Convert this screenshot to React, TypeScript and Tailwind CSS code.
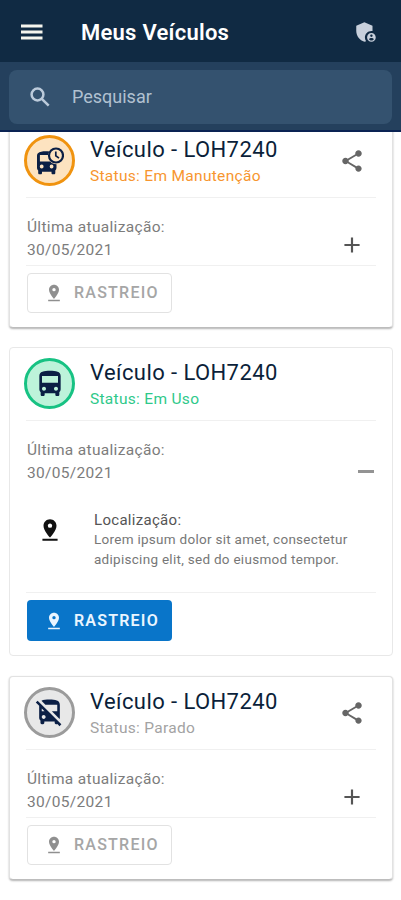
import { ReactNode, useState } from "react"
import { clsx } from "clsx"
import {
    MdAdd,
    MdAdminPanelSettings,
    MdDirectionsBus,
    MdNoTransfer,
    MdPinDrop,
    MdShare,
} from "react-icons/md"

type Status = 'manutencao' | 'uso' | 'parado'

interface IVehicle {
    id: number
    name: string
    status: Status
    updatedAt: string
    location?: string
}

const vehicles: IVehicle[] = [
    { id: 1, name: 'Veículo - LOH7240', status: 'manutencao', updatedAt: '30/05/2021' },
    {
        id: 2,
        name: 'Veículo - LOH7240',
        status: 'uso',
        updatedAt: '30/05/2021',
        location: 'Lorem ipsum dolor sit amet, consectetur adipiscing elit, sed do eiusmod tempor.'
    },
    { id: 3, name: 'Veículo - LOH7240', status: 'parado', updatedAt: '30/05/2021' },
]

function MenuIcon() {
    return (
        <svg viewBox="0 0 22 16" width={22} height={16} fill="currentColor">
            <path d="M0 .5h21.500v3H0zM0 6.500h21.500v3H0zM0 12.500h21.500v3H0z" />
        </svg>
    )
}

function SearchIcon() {
    return (
        <svg viewBox="0 0 20 20" width={20} height={20} fill="none" stroke="#bccbdb" strokeWidth={2.500}>
            <circle cx="7.500" cy="7.500" r="5.900" />
            <path d="M11.800 11.800L18.700 18.700" />
        </svg>
    )
}

function BusClockIcon() {
    return (
        <svg viewBox="0 0 28 28" width={28} height={28} fill="none">
            <path
                fill="#0b1f45"
                fillRule="evenodd"
                d="M13.500 4.500C9 4 4 4.300 2 6.300C1.200 7.100 1 8 1 9V20.800c0 1.100.5 2 1.200 2.700V26c0 .8.500 1.300 1.200 1.300h1.400c.7 0 1.200-.5 1.200-1.300v-1.300h9.500V26c0 .8.5 1.300 1.200 1.300h1.400c.7 0 1.200-.5 1.200-1.300v-2.500c.8-.7 1.200-1.600 1.200-2.700v-3.600c-2.800 0-4.800-.9-6.300-2.700H3.900V8h8.200c.1-1.300.6-2.500 1.400-3.500zM5.700 17.600a1.900 1.900 0 1 1 0 3.800 1.900 1.900 0 0 1 0-3.800zm9.900 0a1.900 1.900 0 1 1 0 3.800 1.900 1.900 0 0 1 0-3.800z"
            />
            <circle cx="20" cy="8.500" r="7" stroke="#0b1f45" strokeWidth="2.200" />
            <path d="M19.800 4.500v4.300l3.200 2.300" stroke="#0b1f45" strokeWidth="1.700" />
        </svg>
    )
}

const statusInfo: Record<Status, { label: string, text: string, circle: string, icon: ReactNode }> = {
    manutencao: {
        label: 'Em Manutenção',
        text: 'text-[#f7962f]',
        circle: 'border-[#f0930f] bg-[#fde3c0]',
        icon: <BusClockIcon />
    },
    uso: {
        label: 'Em Uso',
        text: 'text-[#2fc98a]',
        circle: 'border-[#17c283] bg-[#bdf3da]',
        icon: <MdDirectionsBus size={32} />
    },
    parado: {
        label: 'Parado',
        text: 'text-[#a3a3a3]',
        circle: 'border-[#9b9b9b] bg-[#e8e8e8]',
        icon: <MdNoTransfer size={31} />
    },
}

function Header() {
    return (
        <header className="relative z-10 h-[132px] border-b-2 border-[#0a2353] bg-[#24405d]">
            <div className="flex h-[62px] items-center bg-[#102a43] pl-[21px] pr-[22px] pt-0.5">
                <button type="button" aria-label="Menu" className="text-[#f5f5ee]">
                    <MenuIcon />
                </button>
                <h1 className="ml-[38px] flex-1 text-[22px] font-semibold tracking-[0.25px] text-white">Meus Veículos</h1>
                <MdAdminPanelSettings size={26} className="text-[#c8d0dc]" />
            </div>
            <label className="mx-[9px] mt-2 flex h-[54px] items-center rounded-lg bg-[#34526f] pl-[21px]">
                <SearchIcon />
                <input
                    placeholder="Pesquisar"
                    className="-mt-0.5 ml-[22px] w-60 bg-transparent text-[18px] outline-none placeholder:text-[#b1c1d1]"
                />
            </label>
        </header>
    )
}

function TrackButton({ active }: { active: boolean }) {
    return (
        <button
            type="button"
            className={clsx(
                'flex w-[145px] items-center rounded',
                active ? 'h-[41px] bg-[#0975c9] pl-[17px] text-[#eaf5ff]' : 'h-10 border border-[#e2e2e2] pl-4 text-[#a6a6a6]'
            )}
        >
            <MdPinDrop size={20} className={active ? '' : 'text-[#8f8f8f]'} />
            <span className={clsx('ml-[10px] text-base', active ? 'font-semibold tracking-[1.2px]' : 'font-medium tracking-[1.25px]')}>RASTREIO</span>
        </button>
    )
}

function VehicleCard({ vehicle }: { vehicle: IVehicle }) {
    const [open, setOpen] = useState(Boolean(vehicle.location))
    const info = statusInfo[vehicle.status]

    return (
        <article
            className={clsx(
                'rounded border bg-white px-4',
                open ? 'h-[309px] border-[#e8e8e8]' : 'h-[204px] border-[#e2e2e2] border-b-[#bdbdbd] shadow-[0_1px_2px_rgba(0,0,0,0.3)]'
            )}
        >
            <div className="flex h-[73px] border-b border-[#f0f0f0] pt-[10px]">
                <div className={clsx('-ml-0.5 flex size-[51px] items-center justify-center rounded-full border-3 text-[#0b1f45]', info.circle)}>
                    {info.icon}
                </div>
                <div className="ml-[15px] flex-1 pt-px whitespace-nowrap">
                    <h2 className="text-[22px] leading-[28px] tracking-[0.42px] text-[#0b1f3a]">{vehicle.name}</h2>
                    <p className={clsx('text-[15.500px] leading-6 tracking-[0.3px]', info.text)}>Status: {info.label}</p>
                </div>
                {!open && <MdShare size={26} className="mt-[13px] mr-[11px] text-[#666]" />}
            </div>
            <div className="flex justify-between pt-[18px] pl-px">
                <p className="text-[15.500px] leading-[22.500px] tracking-[0.32px] text-[#7c7c7c]">
                    Última atualização:<br />{vehicle.updatedAt}
                </p>
                <button
                    type="button"
                    aria-label={open ? 'Recolher' : 'Expandir'}
                    onClick={() => setOpen(!open)}
                    className={clsx('h-6', open ? 'mt-[20px] mr-0.5 text-[#8a8a8a]' : 'mt-[16px] mr-[11px] text-[#555]')}
                >
                    {open ? <span className="block h-[3px] w-4 bg-[#939393]" /> : <MdAdd size={26} />}
                </button>
            </div>
            {open && (
                <div className="flex pt-[26px] pl-[11px]">
                    <MdPinDrop size={26} className="mt-[7px] text-[#111]" />
                    <div className="ml-[31px]">
                        <p className="text-[15px] leading-5 tracking-[0.3px] text-[#555]">Localização:</p>
                        <p className="w-[270px] text-[13.500px] leading-[19.500px] tracking-[0.28px] text-[#777]">{vehicle.location}</p>
                    </div>
                </div>
            )}
            <div className={clsx('border-t border-[#f0f0f0] pl-px', open ? 'mt-[23px] pt-[7px]' : 'mt-1 pt-[7px]')}>
                <TrackButton active={open} />
            </div>
        </article>
    )
}

export default function App() {
    return (
        <div className="h-[900px] overflow-hidden bg-white font-['Roboto',sans-serif]">
            <Header />
            <main className="-mt-2 flex flex-col pl-[9px] pr-2 [&>*+*]:mt-[19px] [&>*:last-child]:mt-5">
                {vehicles.map((vehicle) => (
                    <VehicleCard key={vehicle.id} vehicle={vehicle} />
                ))}
            </main>
        </div>
    )
}
